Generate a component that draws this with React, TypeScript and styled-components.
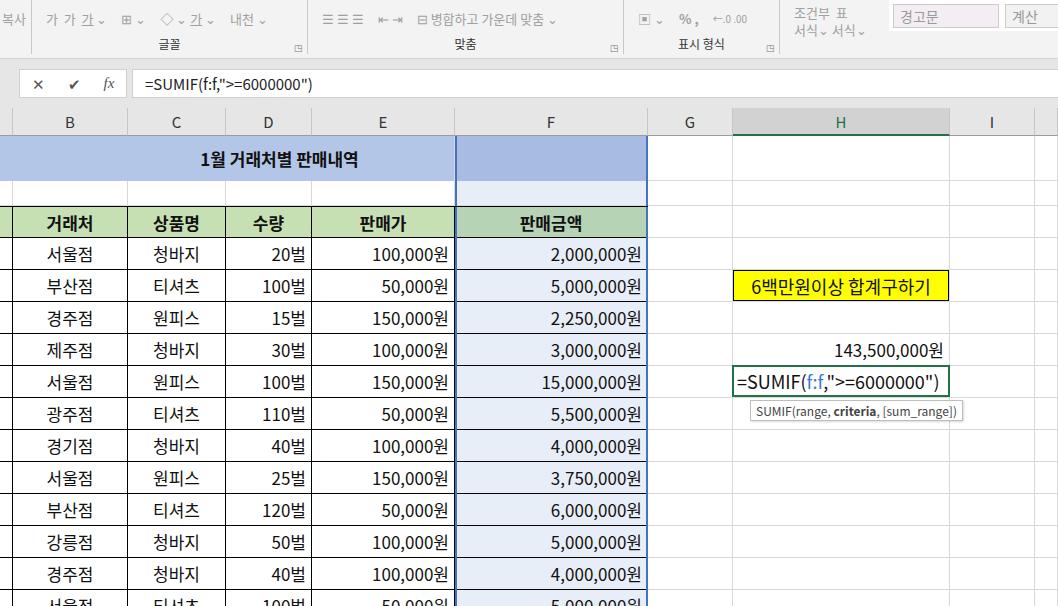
import React from "react";
import styled, { createGlobalStyle, css } from "styled-components";

const Global = createGlobalStyle`
  body { margin: 0; font-family: "Noto Sans CJK KR", "Noto Sans", sans-serif; background: #fff; overflow: hidden; }
`;

const FONT = `"Malgun Gothic", "Noto Sans CJK KR", "Noto Sans", sans-serif`;
const COLS = "13px 115px 98px 86px 143px 193px 85px 217px 85px 1fr";

const Ribbon = styled.div`
  height: 58px;
  background: #f3f3f3;
  border-bottom: 1px solid #d4d4d4;
  display: flex;
  font-family: ${FONT};
  color: #a0a0a0;
  font-size: 13px;
  overflow: hidden;
`;

const Group = styled.div<{ $w: number }>`
  width: ${(p) => p.$w}px;
  flex: none;
  border-right: 1px solid #c8c8c8;
  margin: 0 0 4px;
  display: flex;
  flex-direction: column;
  position: relative;
`;

const Tools = styled.div`
  height: 36px;
  display: flex;
  align-items: center;
  gap: 14px;
  padding: 0 14px;
  white-space: nowrap;
`;

const U = styled.span`
  text-decoration: underline;
`;

const GroupLabel = styled.div`
  text-align: center;
  color: #333;
  font-size: 12px;
  line-height: 16px;
`;

const Launcher = styled.span`
  position: absolute;
  right: 4px;
  bottom: 0;
  font-size: 9px;
  color: #777;
`;

const StyleBox = styled.div<{ $bg: string }>`
  width: 98px;
  height: 22px;
  background: ${(p) => p.$bg};
  border: 1px solid #ccc;
  color: #999;
  font-size: 14px;
  padding-left: 6px;
  line-height: 22px;
`;

const Band = styled.div<{ $h: number }>`
  height: ${(p) => p.$h}px;
  background: #e6e6e6;
`;

const FormulaBar = styled.div`
  height: 29px;
  background: #e6e6e6;
  display: flex;
  align-items: stretch;
  gap: 5px;
  padding-left: 19px;
`;

const FxBox = styled.div`
  width: 106px;
  background: #fff;
  border: 1px solid #d0d0d0;
  display: flex;
  align-items: center;
  justify-content: space-around;
  color: #555;
  font-size: 15px;
`;

const FormulaInput = styled.div`
  flex: 1;
  background: #fff;
  border: 1px solid #d0d0d0;
  border-right: none;
  font-family: ${FONT};
  font-size: 15px;
  color: #222;
  display: flex;
  align-items: center;
  padding-left: 12px;
`;

const Grid = styled.div`
  display: grid;
  grid-template-columns: ${COLS};
  font-family: ${FONT};
  font-size: 17px;
  color: #111;
`;

const ColHead = styled.div<{ $sel?: boolean }>`
  background: ${(p) => (p.$sel ? "#d2d2d2" : "#e6e6e6")};
  border-right: 1px solid #c6c6c6;
  border-bottom: ${(p) => (p.$sel ? "2px solid #217346" : "1px solid #9b9b9b")};
  box-sizing: border-box;
  height: 28px;
  display: flex;
  align-items: center;
  justify-content: center;
  font-size: 15px;
  color: ${(p) => (p.$sel ? "#217346" : "#333")};
`;

const Cell = styled.div<{
  $h: number;
  $bg?: string;
  $align?: "left" | "center" | "right";
  $bold?: boolean;
  $box?: boolean;
  $span?: number;
}>`
  height: ${(p) => p.$h}px;
  box-sizing: border-box;
  background: ${(p) => p.$bg || "#fff"};
  border-right: 1px solid #d9d9d9;
  border-bottom: 1px solid #d9d9d9;
  display: flex;
  align-items: center;
  justify-content: ${(p) =>
    p.$align === "right" ? "flex-end" : p.$align === "left" ? "flex-start" : "center"};
  padding: 0 5px;
  font-weight: ${(p) => (p.$bold ? 700 : 400)};
  white-space: nowrap;
  position: relative;
  ${(p) => p.$span && `grid-column: span ${p.$span};`}
  ${(p) =>
    p.$box &&
    css`
      border-right: 1px solid #000;
      border-bottom: 1px solid #000;
    `}
`;

const SelEdge = styled.div<{ $side: "l" | "r" }>`
  position: absolute;
  top: 0;
  bottom: -1px;
  ${(p) => (p.$side === "l" ? "left: 0;" : "right: -1px;")}
  width: 2px;
  background: #4472c4;
`;

const Note = styled.div`
  background: #ffff00;
  border: 1px solid #000;
  height: 100%;
  width: calc(100% + 10px);
  box-sizing: border-box;
  display: flex;
  align-items: center;
  justify-content: center;
  margin: 0 -5px;
  font-size: 18px;
`;

const EditCell = styled.div`
  position: absolute;
  inset: -1px -1px 0 -1px;
  border: 2px solid #217346;
  background: #fff;
  display: flex;
  align-items: center;
  padding-left: 3px;
  font-size: 18px;
  z-index: 2;
`;

const Tip = styled.div`
  position: absolute;
  top: 33px;
  left: 16px;
  background: #fff;
  border: 1px solid #bdbdbd;
  box-shadow: 1px 1px 2px rgba(0, 0, 0, 0.15);
  font-size: 12px;
  color: #444;
  padding: 1px 5px;
  z-index: 3;
`;

const Ref = styled.span`
  color: #3c78d8;
`;

const data = [
  ["서울점", "청바지", "20벌", "100,000원", "2,000,000원"],
  ["부산점", "티셔츠", "100벌", "50,000원", "5,000,000원"],
  ["경주점", "원피스", "15벌", "150,000원", "2,250,000원"],
  ["제주점", "청바지", "30벌", "100,000원", "3,000,000원"],
  ["서울점", "원피스", "100벌", "150,000원", "15,000,000원"],
  ["광주점", "티셔츠", "110벌", "50,000원", "5,500,000원"],
  ["경기점", "청바지", "40벌", "100,000원", "4,000,000원"],
  ["서울점", "원피스", "25벌", "150,000원", "3,750,000원"],
  ["부산점", "티셔츠", "120벌", "50,000원", "6,000,000원"],
  ["강릉점", "청바지", "50벌", "100,000원", "5,000,000원"],
  ["경주점", "청바지", "40벌", "100,000원", "4,000,000원"],
  ["서울점", "티셔츠", "100벌", "50,000원", "5,000,000원"],
];

const SEL_BG = "#e8eef8";

function Tail({ h, row }: { h: number; row: number }) {
  return (
    <>
      <Cell $h={h} />
      <Cell $h={h} $align="right">
        {row === 2 && <Note>6백만원이상 합계구하기</Note>}
        {row === 4 && "143,500,000원"}
        {row === 5 && (
          <EditCell>
            =SUMIF(<Ref>f:f</Ref>,"&gt;=6000000")
            <Tip>
              SUMIF(range, <b>criteria</b>, [sum_range])
            </Tip>
          </EditCell>
        )}
      </Cell>
      <Cell $h={h} />
      <Cell $h={h} />
    </>
  );
}

export default function App() {
  return (
    <>
      <Global />
      <Ribbon>
        <Group $w={31}>
          <Tools style={{ padding: "0 2px" }}>복사</Tools>
        </Group>
        <Group $w={275}>
          <Tools>
            <span>가&nbsp; 가&nbsp; <U>가</U> ⌄</span>
            <span>⊞ ⌄</span>
            <span>◇ ⌄ <U>가</U> ⌄</span>
            <span>내천 ⌄</span>
          </Tools>
          <GroupLabel>글꼴</GroupLabel>
          <Launcher>◳</Launcher>
        </Group>
        <Group $w={315}>
          <Tools>
            <span>☰ ☰ ☰</span>
            <span>⇤ ⇥</span>
            <span>⊟ 병합하고 가운데 맞춤 ⌄</span>
          </Tools>
          <GroupLabel>맞춤</GroupLabel>
          <Launcher>◳</Launcher>
        </Group>
        <Group $w={155}>
          <Tools>
            <span>▣ ⌄</span>
            <span style={{ fontWeight: 700 }}>% ,</span>
            <span style={{ fontSize: 10 }}>←.0 .00</span>
          </Tools>
          <GroupLabel>표시 형식</GroupLabel>
          <Launcher>◳</Launcher>
        </Group>
        <div style={{ display: "flex", flex: 1 }}>
          <div style={{ width: 95, paddingLeft: 14, lineHeight: "17px", paddingTop: 4 }}>
            조건부 &nbsp;표
            <br />
            서식⌄ 서식⌄
          </div>
          <div style={{ display: "flex", flexDirection: "column", flex: 1 }}>
            <div style={{ display: "flex", gap: 6, background: "#fff", height: 31, alignItems: "center", paddingLeft: 4 }}>
              <StyleBox $bg="#f4eef4">경고문</StyleBox>
              <StyleBox $bg="#f2f2f2">계산</StyleBox>
            </div>
            <GroupLabel style={{ textAlign: "right", marginTop: 4, paddingRight: 2 }}>스타</GroupLabel>
          </div>
        </div>
      </Ribbon>
      <Band $h={10} />
      <FormulaBar>
        <FxBox>
          <span>✕</span>
          <span>✔</span>
          <i style={{ fontFamily: "Liberation Serif, serif" }}>fx</i>
        </FxBox>
        <FormulaInput>=SUMIF(f:f,"&gt;=6000000")</FormulaInput>
      </FormulaBar>
      <Band $h={10} />
      <Grid>
        <ColHead />
        {["B", "C", "D", "E", "F", "G"].map((c) => (
          <ColHead key={c}>{c}</ColHead>
        ))}
        <ColHead $sel>H</ColHead>
        <ColHead>I</ColHead>
        <ColHead />

        {/* title row */}
        <Cell $h={45} $span={5} $bg="#b4c6e7" $bold style={{ borderBottom: "none", paddingLeft: 110 }}>
          1월 거래처별 판매내역
        </Cell>
        <Cell $h={45} $bg="#a8bbe3" style={{ borderBottom: "none" }}>
          <SelEdge $side="l" />
          <SelEdge $side="r" />
        </Cell>
        <Tail h={45} row={-1} />

        {/* empty row */}
        {[0, 1, 2, 3, 4].map((i) => (
          <Cell key={i} $h={25} />
        ))}
        <Cell $h={25} $bg={SEL_BG}>
          <SelEdge $side="l" />
          <SelEdge $side="r" />
        </Cell>
        <Tail h={25} row={-1} />

        {/* header row */}
        <Cell $h={32} $bg="#c6e0b4" $box style={{ borderTop: "1px solid #000" }} />
        {["거래처", "상품명", "수량", "판매가"].map((t) => (
          <Cell key={t} $h={32} $bg="#c6e0b4" $bold $box style={{ borderTop: "1px solid #000" }}>
            {t}
          </Cell>
        ))}
        <Cell $h={32} $bg="#b7d3b5" $bold $box style={{ borderTop: "1px solid #000" }}>
          판매금액
          <SelEdge $side="l" />
          <SelEdge $side="r" />
        </Cell>
        <Tail h={32} row={0} />

        {data.map((r, ri) => (
          <React.Fragment key={ri}>
            <Cell $h={32} $box />
            <Cell $h={32} $box>{r[0]}</Cell>
            <Cell $h={32} $box>{r[1]}</Cell>
            <Cell $h={32} $box $align="right">{r[2]}</Cell>
            <Cell $h={32} $box $align="right">{r[3]}</Cell>
            <Cell $h={32} $box $align="right" $bg={SEL_BG}>
              {r[4]}
              <SelEdge $side="l" />
              <SelEdge $side="r" />
            </Cell>
            <Tail h={32} row={ri + 1} />
          </React.Fragment>
        ))}
      </Grid>
    </>
  );
}
